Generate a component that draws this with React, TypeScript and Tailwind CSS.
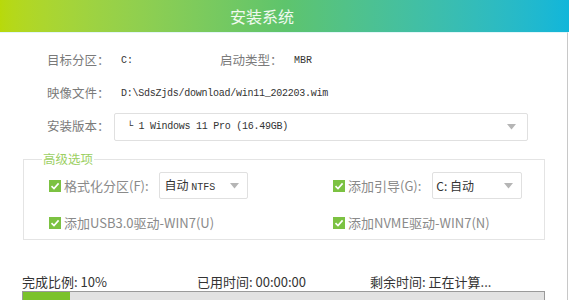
import React from 'react';

const cjk = "font-['Noto_Sans_CJK_SC',sans-serif]";
const mono = "font-['Liberation_Mono','Noto_Sans_CJK_SC',monospace]";

const Arrow: React.FC = () => (
  <svg width="9" height="6" viewBox="0 0 9 6" className="shrink-0">
    <path d="M0 0 H9 L4.5 5.5 Z" fill="#b5b5b5" />
  </svg>
);

const Check: React.FC = () => (
  <span className="w-[12px] h-[12px] bg-[#7cc242] flex items-center justify-center shrink-0">
    <svg width="10" height="10" viewBox="0 0 10 10">
      <path d="M1.5 5.2 L4 7.6 L8.6 2.4" stroke="#fff" strokeWidth="1.6" fill="none" />
    </svg>
  </span>
);

const Option: React.FC<{ label: string }> = ({ label }) => (
  <div className="flex items-center gap-[3px]">
    <Check />
    <span className={`${cjk} text-[13px] text-[#8a8a8a] leading-none`}>{label}</span>
  </div>
);

const App: React.FC = () => {
  return (
    <div className="w-[569px] h-[300px] overflow-hidden bg-white flex flex-col">
      <div className="h-[32px] shrink-0 bg-linear-to-r from-[#b8d90a] via-[#5ec46c] to-[#10b6da] flex items-center justify-center pr-[45px]">
        <span className={`${cjk} text-[16px] text-white/90`}>安装系统</span>
      </div>
      <div className="flex-1 border-r border-[#c8c8c8] border-t border-t-[#e2f6f9] mr-[1px]">
        <div className="pt-[11px]">
          <div className="h-[33px] flex items-center pl-[47px]">
            <span className={`${cjk} w-[74px] text-[12.5px] text-[#7a7a7a]`}>目标分区：</span>
            <span className={`${mono} w-[99px] text-[10px] text-[#333]`}>C:</span>
            <span className={`${cjk} w-[74px] text-[12.5px] text-[#7a7a7a]`}>启动类型：</span>
            <span className={`${mono} text-[10px] text-[#333]`}>MBR</span>
          </div>
          <div className="h-[33px] flex items-center pl-[47px]">
            <span className={`${cjk} w-[74px] text-[12.5px] text-[#7a7a7a]`}>映像文件：</span>
            <span className={`${mono} text-[10px] tracking-[-0.25px] text-[#333]`}>D:\SdsZjds/download/win11_202203.wim</span>
          </div>
          <div className="h-[33px] flex items-center pl-[47px]">
            <span className={`${cjk} w-[67px] text-[12.5px] text-[#7a7a7a]`}>安装版本：</span>
            <div className="w-[414px] h-[28px] border border-[#e0e0e0] rounded-[2px] flex items-center justify-between pl-[12px] pr-[11px]">
              <span className={`${mono} text-[10px] tracking-[-0.25px] text-[#333]`}>└ 1 Windows 11 Pro (16.49GB)</span>
              <Arrow />
            </div>
          </div>
        </div>

        <fieldset className="ml-[23px] w-[522px] mt-[8px] border border-[#e4e4e4] pb-[8px]">
          <legend className={`${cjk} ml-[18px] px-[1px] text-[12.5px] text-[#9ccf63] leading-[16px]`}>高级选项</legend>
          <div className="flex items-center pl-[25px] mt-[5px] h-[27px]">
            <div className="w-[284px] flex items-center gap-[10px]">
              <Option label="格式化分区(F):" />
              <div className="w-[89px] h-[27px] border border-[#e0e0e0] rounded-[2px] flex items-center justify-between pl-[5px] pr-[8px]">
                <span className={`${cjk} text-[12px] text-[#333]`}>自动 <span className={`${mono} text-[10px]`}>NTFS</span></span>
                <Arrow />
              </div>
            </div>
            <div className="flex items-center gap-[11px]">
              <Option label="添加引导(G):" />
              <div className="w-[90px] h-[27px] border border-[#e0e0e0] rounded-[2px] flex items-center justify-between pl-[3px] pr-[8px]">
                <span className={`${cjk} text-[12px] text-[#333]`}>C: 自动</span>
                <Arrow />
              </div>
            </div>
          </div>
          <div className="flex items-center pl-[25px] mt-[15px] h-[17px]">
            <div className="w-[284px]">
              <Option label="添加USB3.0驱动-WIN7(U)" />
            </div>
            <Option label="添加NVME驱动-WIN7(N)" />
          </div>
        </fieldset>

        <div className={`${cjk} flex items-center ml-[22px] mt-[33px] h-[17px] text-[13px] text-[#333]`}>
          <span className="w-[175px]">完成比例: 10%</span>
          <span className="w-[173px]">已用时间: 00:00:00</span>
          <span>剩余时间: 正在计算...</span>
        </div>
        <div className="ml-[22px] mt-[1px] w-[523px] h-[14px] border border-[#9a9a9a] bg-[#e2e2e2]">
          <div className="w-[47px] h-full bg-[#7bc22c]" />
        </div>
      </div>
    </div>
  );
};

export default App;
